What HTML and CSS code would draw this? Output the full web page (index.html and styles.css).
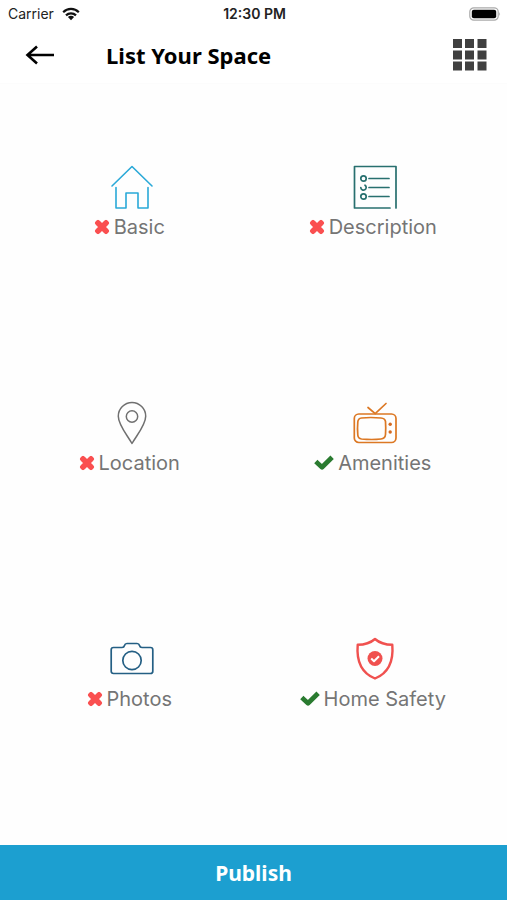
FILE: index.html
```html
<!DOCTYPE html>
<html lang="en">
<head>
<meta charset="utf-8">
<meta name="viewport" content="width=device-width, initial-scale=1">
<title>List Your Space</title>
<link rel="stylesheet" href="styles.css">
</head>
<body>
<svg class="symbols" aria-hidden="true">
  <symbol id="cross" viewBox="0 0 16 16"><path d="M4 4l8 8M12 4l-8 8" fill="none" stroke="currentColor" stroke-width="5.600" stroke-linecap="round"/><path d="M4 4l8 8M12 4l-8 8" fill="none" stroke="currentColor" stroke-width="4.600" stroke-linecap="square"/></symbol>
  <symbol id="check" viewBox="0 0 20 16"><path d="M3.600 8.200l4.400 4 8.400-8.200" fill="none" stroke="currentColor" stroke-width="4.800" stroke-linecap="square" stroke-linejoin="round"/></symbol>
</svg>
<header class="top">
  <div class="status">
    <div class="carrier">
      <span>Carrier</span>
      <svg class="wifi" viewBox="0 0 18 14" aria-hidden="true">
        <g fill="none" stroke="#111" stroke-width="2.2"><path d="M1.2 5.2a11 11 0 0 1 15.6 0"/><path d="M4 8.400a7.1 7.1 0 0 1 10 0"/></g>
        <path d="M5.900 10.100a4.400 4.400 0 0 1 6.200 0L9 13.300z" fill="#111"/>
      </svg>
    </div>
    <time class="clock">12:30 PM</time>
    <svg class="battery" viewBox="0 0 32 14" aria-hidden="true">
      <rect x=".8" y=".8" width="28.4" height="12.4" rx="4" fill="#fff" stroke="#aaa" stroke-width="1.2"/>
      <rect x="2.8" y="2.8" width="24.4" height="8.4" rx="2" fill="#000"/>
      <path d="M30.4 5q1.4 2 0 4z" fill="#999"/>
    </svg>
  </div>
  <div class="bar">
    <button class="icon-button" type="button" aria-label="Back">
      <svg class="back" viewBox="0 0 30 20" aria-hidden="true"><path d="M29 10H2.500M12 1.500L2.500 10l9.500 8.500" fill="none" stroke="#000" stroke-width="2.600"/></svg>
    </button>
    <h1 class="title">List Your Space</h1>
    <button class="icon-button" type="button" aria-label="Menu">
      <svg class="menu" viewBox="0 0 34 32" aria-hidden="true"><path fill="#404040" d="M0 0h9v9H0zM12 0h9v9h-9zM24.500 0h9v9h-9zM0 11.500h9v9H0zM12 11.500h9v9h-9zM24.500 11.500h9v9h-9zM0 22.500h9v9H0zM12 22.500h9v9h-9zM24.500 22.500h9v9h-9z"/></svg>
    </button>
  </div>
</header>
<main class="steps">
  <a class="step" href="#basic">
    <svg class="picture" viewBox="0 0 44 44" fill="none" stroke="#2aa9d8" stroke-width="1.600" stroke-linecap="round" stroke-linejoin="round" aria-hidden="true"><path d="M2 21L22 1.500 42 21M6 22.500V43h10V28h12v15h10V22.500"/></svg>
    <span class="label"><svg class="cross" role="img" aria-label="Incomplete"><use href="#cross"/></svg>Basic</span>
  </a>
  <a class="step" href="#description">
    <svg class="picture" viewBox="0 0 44 44" fill="none" stroke="#28706f" stroke-width="1.700" stroke-linecap="round" stroke-linejoin="round" aria-hidden="true"><path d="M43 43V1.500H1.500V43H37M16 13.500h20M16 22.500h20M16 31.500h20"/><circle cx="10.500" cy="13.500" r="2.700"/><path d="M12 20.200a2.700 2.700 0 1 1-4.200 2.300"/><circle cx="10.500" cy="31.500" r="2.700"/></svg>
    <span class="label"><svg class="cross" role="img" aria-label="Incomplete"><use href="#cross"/></svg>Description</span>
  </a>
  <a class="step" href="#location">
    <svg class="picture" viewBox="0 0 44 44" fill="none" stroke="#707070" stroke-width="1.500" stroke-linejoin="round" aria-hidden="true"><path d="M22 42.500C17.500 34.500 8.300 24 8.300 15.200a13.700 13.700 0 0 1 27.400 0C35.700 24 26.500 34.500 22 42.500z"/><circle cx="22" cy="15.500" r="5.700"/></svg>
    <span class="label"><svg class="cross" role="img" aria-label="Incomplete"><use href="#cross"/></svg>Location</span>
  </a>
  <a class="step" href="#amenities">
    <svg class="picture" viewBox="0 0 44 44" fill="none" stroke="#dc7824" stroke-width="1.700" stroke-linecap="round" stroke-linejoin="round" aria-hidden="true"><rect x="1.300" y="13" width="41.700" height="28.500" rx="4.500"/><path d="M15 6.500l7.200 6.200L33 2.500M8.500 17q9-1 19.500 0 4 .300 4.500 3.500.500 7 0 13-.300 4-4.500 4.500-9 1-19.500 0-3.500-.500-3.700-4-.600-6.500 0-13Q5 17.500 8.500 17z"/><g fill="#d56a20" stroke="none"><circle cx="37.200" cy="23.300" r="1.700"/><circle cx="37.200" cy="31" r="1.700"/></g></svg>
    <span class="label"><svg class="check" role="img" aria-label="Complete"><use href="#check"/></svg>Amenities</span>
  </a>
  <a class="step" href="#photos">
    <svg class="picture" viewBox="0 0 44 44" fill="none" stroke="#245f84" stroke-width="1.700" stroke-linejoin="round" aria-hidden="true"><path d="M3.500 10.500H12q2 0 2.500-2t2.500-2h10q2 0 2.500 2t2.500 2h8.500q2.300 0 2.300 2.300v21.400q0 2.300-2.300 2.300h-37q-2.300 0-2.300-2.300V12.800q0-2.300 2.300-2.300z"/><circle cx="22" cy="23.500" r="9.200"/></svg>
    <span class="label"><svg class="cross" role="img" aria-label="Incomplete"><use href="#cross"/></svg>Photos</span>
  </a>
  <a class="step" href="#safety">
    <svg class="picture" viewBox="0 0 44 44" fill="none" stroke="#f0514f" stroke-width="2.400" stroke-linejoin="round" aria-hidden="true"><path d="M22 2c-4.500 4-10 5.800-17.300 5.800C3.500 22 7.500 35.500 22 41.500 36.500 35.500 40.500 22 39.300 7.800 32 7.800 26.500 6 22 2z"/><circle cx="22" cy="21.500" r="7.500" fill="#f0514f" stroke="none"/><path d="M18.200 21.500l2.800 2.800 5-5" stroke="#fff" stroke-width="2"/></svg>
    <span class="label"><svg class="check" role="img" aria-label="Complete"><use href="#check"/></svg>Home Safety</span>
  </a>
</main>
<button class="publish" type="button">Publish</button>
</body>
</html>
```
FILE: styles.css
```css
* {
  box-sizing: border-box;
}

body {
  display: flex;
  flex-direction: column;
  min-height: 100vh;
  margin: 0;
  background: #fefefe;
  font-family: Inter, "Liberation Sans", sans-serif;
}

svg {
  display: block;
  flex: none;
}

.symbols {
  position: absolute;
  width: 0;
  height: 0;
}

.top {
  background: #fff;
  border-bottom: 1px solid #fcfcfc;
}

.status {
  display: grid;
  grid-template-columns: 1fr auto 1fr;
  align-items: center;
  height: 27px;
  padding: 0 6px 0 8px;
  color: #222;
  font-size: 14px;
}

.carrier {
  display: flex;
  align-items: center;
  gap: 8px;
}

.wifi {
  width: 18px;
  height: 14px;
}

.clock {
  font-weight: 600;
}

.battery {
  justify-self: end;
  width: 32px;
  height: 14px;
}

.bar {
  display: flex;
  align-items: center;
  height: 56px;
  padding: 0 20px 0 25px;
}

.icon-button {
  padding: 0;
  border: 0;
  background: none;
}

.back {
  width: 30px;
  height: 20px;
}

.menu {
  width: 34px;
  height: 32px;
}

.title {
  flex: 1;
  margin: 0 0 0 51px;
  color: #000;
  font: 700 22px/28px "Noto Sans", sans-serif;
}

.steps {
  display: grid;
  flex: 1;
  grid-template-columns: 1fr 1fr;
  grid-auto-rows: 236px;
  align-content: start;
  align-items: center;
  padding: 0 10px;
}

.step {
  display: flex;
  flex-direction: column;
  align-items: center;
  gap: 5px;
  color: #757575;
  text-decoration: none;
}

.picture {
  width: 44px;
  height: 44px;
}

.label {
  display: flex;
  align-items: center;
  gap: 4px;
  padding-right: 5px;
  font-size: 20px;
  line-height: 26px;
}

.cross {
  width: 16px;
  height: 16px;
  color: #fa4f50;
}

.check {
  width: 20px;
  height: 16px;
  color: #2a7b30;
}

.publish {
  height: 55px;
  border: 0;
  background: #1c9fd0;
  color: #fff;
  font: 700 21px/28px "Noto Sans", sans-serif;
}
```
